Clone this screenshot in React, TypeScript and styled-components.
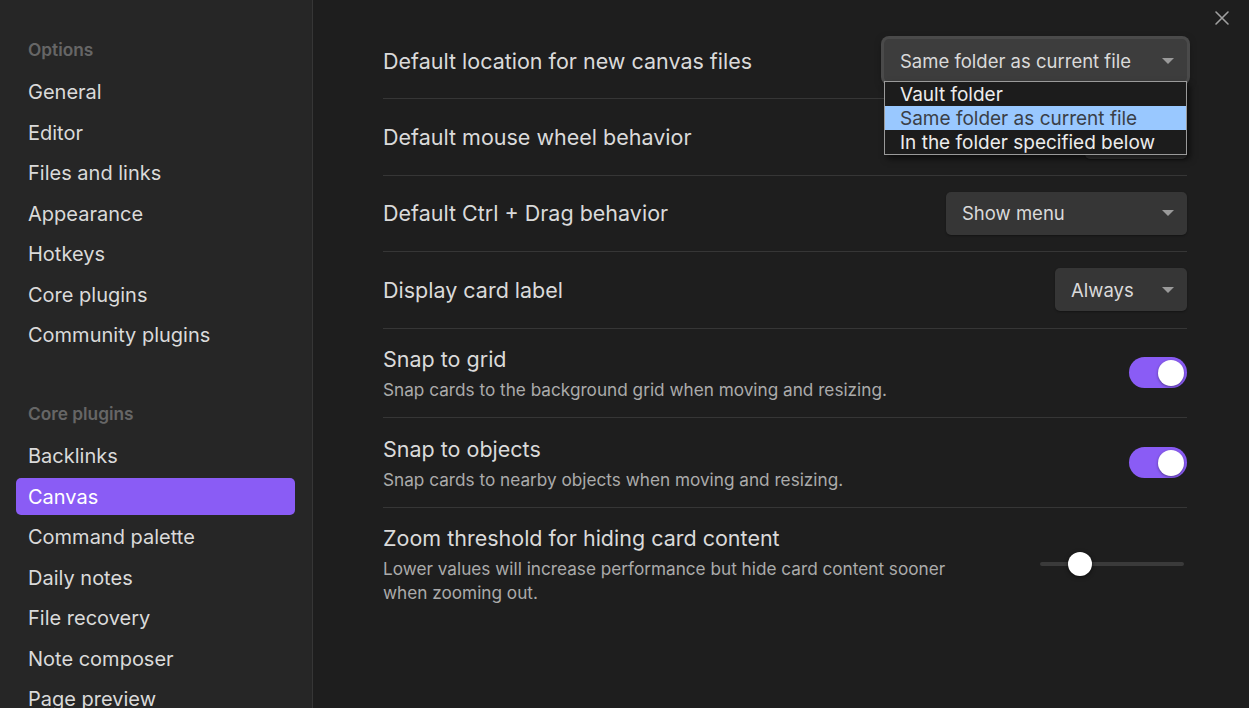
import React from "react";
import styled, { createGlobalStyle } from "styled-components";

const GlobalStyle = createGlobalStyle`
  html, body { margin: 0; padding: 0; background: #1e1e1e; }
  body { font-family: Inter, "Noto Sans", sans-serif; -webkit-font-smoothing: antialiased; }
  * { box-sizing: border-box; }
`;

const Shell = styled.div`
  display: flex;
  width: 1249px;
  height: 708px;
  overflow: hidden;
  position: relative;
  background: #1e1e1e;
`;

const Sidebar = styled.nav`
  width: 313px;
  flex-shrink: 0;
  background: #262626;
  border-right: 1px solid #363636;
  padding: 31px 17px 0 16px;
  display: flex;
  flex-direction: column;
`;

const Group = styled.div<{ $gap?: number }>`
  display: flex;
  flex-direction: column;
  margin-top: ${(p) => p.$gap ?? 0}px;
`;

const GroupTitle = styled.div`
  height: 36px;
  margin-bottom: 6.5px;
  padding: 0 12px;
  display: flex;
  align-items: center;
  font-size: 17.3px;
  font-weight: 600;
  color: #666666;
`;

const NavItem = styled.div<{ $active?: boolean }>`
  height: 37px;
  margin-bottom: 3.5px;
  padding: 0 12px;
  display: flex;
  align-items: center;
  border-radius: 5px;
  font-size: 20px;
  color: ${(p) => (p.$active ? "#ffffff" : "#dadada")};
  background: ${(p) => (p.$active ? "#8a5cf5" : "transparent")};
  white-space: nowrap;
`;

const Main = styled.main`
  flex: 1;
  padding: 23px 62px 0 70px;
  display: flex;
  flex-direction: column;
`;

const Row = styled.div<{ $first?: boolean }>`
  display: flex;
  align-items: center;
  justify-content: space-between;
  padding: 16.2px 0;
  border-top: ${(p) => (p.$first ? "none" : "1px solid #363636")};
  position: relative;
`;

const Info = styled.div`
  display: flex;
  flex-direction: column;
  gap: 5px;
  flex: 1 1 auto;
  min-width: 0;
`;

const Title = styled.div`
  font-size: 21.5px;
  line-height: 28px;
  color: #dadada;
`;

const Desc = styled.div`
  font-size: 17.2px;
  line-height: 23.5px;
  color: #ababab;
  max-width: 585px;
`;

const Control = styled.div`
  display: flex;
  align-items: center;
  justify-content: flex-end;
  flex-shrink: 0;
  position: relative;
`;

const SelectBox = styled.div<{ $w: number; $focused?: boolean }>`
  width: ${(p) => p.$w}px;
  height: 43px;
  border-radius: 5px;
  background: ${(p) => (p.$focused ? "#3d3d3d" : "#363636")};
  box-shadow: ${(p) =>
    p.$focused
      ? "0 0 0 3px #4a4a4a, 0 2px 8px rgba(0,0,0,0.6)"
      : "0 1px 2px rgba(0,0,0,0.35)"};
  display: flex;
  align-items: center;
  justify-content: space-between;
  padding: 0 13px 0 16px;
  font-size: 18.5px;
  color: #dadada;
  white-space: nowrap;
`;

const Caret = styled.span`
  width: 0;
  height: 0;
  border-left: 6px solid transparent;
  border-right: 6px solid transparent;
  border-top: 6px solid #9a9a9a;
`;

const Popup = styled.div`
  position: absolute;
  top: 42px;
  right: 0;
  width: 303px;
  background: #1c1c1c;
  border: 1px solid #9a9a9a;
  box-shadow: 3px 4px 6px rgba(0, 0, 0, 0.55);
  z-index: 5;
  display: flex;
  flex-direction: column;
`;

const Option = styled.div<{ $hl?: boolean }>`
  height: 24px;
  padding: 0 15px;
  display: flex;
  align-items: center;
  font-size: 19px;
  color: ${(p) => (p.$hl ? "#3a3f47" : "#ececec")};
  background: ${(p) => (p.$hl ? "#99c8ff" : "transparent")};
  white-space: nowrap;
`;

const Toggle = styled.div<{ $on?: boolean }>`
  width: 58px;
  height: 31px;
  border-radius: 16px;
  background: ${(p) => (p.$on ? "#8a5cf5" : "#3a3a3a")};
  display: flex;
  align-items: center;
  justify-content: ${(p) => (p.$on ? "flex-end" : "flex-start")};
  padding: 0 3px;
`;

const Knob = styled.div`
  width: 26px;
  height: 26px;
  border-radius: 50%;
  background: #ffffff;
  box-shadow: 0 1px 3px rgba(0, 0, 0, 0.4);
`;

const SliderWrap = styled.div`
  width: 147px;
  height: 26px;
  display: flex;
  align-items: center;
  position: relative;
  padding-right: 3px;
`;

const Track = styled.div`
  flex: 1;
  height: 4px;
  border-radius: 2px;
  background: #3a3a3a;
`;

const Thumb = styled.div`
  position: absolute;
  top: 1px;
  width: 24px;
  height: 24px;
  border-radius: 50%;
  background: #ffffff;
  box-shadow: 0 1px 4px rgba(0, 0, 0, 0.6);
`;

const Close = styled.button`
  position: absolute;
  top: 10px;
  right: 19px;
  width: 16px;
  height: 16px;
  padding: 0;
  border: none;
  background: transparent;
  color: #a0a0a0;
  display: flex;
`;

const options = ["General", "Editor", "Files and links", "Appearance", "Hotkeys", "Core plugins", "Community plugins"];
const plugins = ["Backlinks", "Canvas", "Command palette", "Daily notes", "File recovery", "Note composer", "Page preview"];

export default function App() {
  return (
    <>
      <GlobalStyle />
      <Shell>
        <Sidebar>
          <Group>
            <GroupTitle>Options</GroupTitle>
            {options.map((o) => (
              <NavItem key={o}>{o}</NavItem>
            ))}
          </Group>
          <Group $gap={38}>
            <GroupTitle>Core plugins</GroupTitle>
            {plugins.map((o) => (
              <NavItem key={o} $active={o === "Canvas"}>
                {o}
              </NavItem>
            ))}
          </Group>
        </Sidebar>
        <Main>
          <Row $first>
            <Info>
              <Title>Default location for new canvas files</Title>
            </Info>
            <Control>
              <SelectBox $w={303} $focused>
                Same folder as current file
                <Caret />
              </SelectBox>
              <Popup>
                <Option>Vault folder</Option>
                <Option $hl>Same folder as current file</Option>
                <Option>In the folder specified below</Option>
              </Popup>
            </Control>
          </Row>
          <Row>
            <Info>
              <Title>Default mouse wheel behavior</Title>
            </Info>
            <Control>
              <SelectBox $w={102}>
                Zoom
                <Caret />
              </SelectBox>
            </Control>
          </Row>
          <Row>
            <Info>
              <Title>Default Ctrl + Drag behavior</Title>
            </Info>
            <Control>
              <SelectBox $w={241}>
                Show menu
                <Caret />
              </SelectBox>
            </Control>
          </Row>
          <Row>
            <Info>
              <Title>Display card label</Title>
            </Info>
            <Control>
              <SelectBox $w={132}>
                Always
                <Caret />
              </SelectBox>
            </Control>
          </Row>
          <Row>
            <Info>
              <Title>Snap to grid</Title>
              <Desc>Snap cards to the background grid when moving and resizing.</Desc>
            </Info>
            <Control>
              <Toggle $on>
                <Knob />
              </Toggle>
            </Control>
          </Row>
          <Row>
            <Info>
              <Title>Snap to objects</Title>
              <Desc>Snap cards to nearby objects when moving and resizing.</Desc>
            </Info>
            <Control>
              <Toggle $on>
                <Knob />
              </Toggle>
            </Control>
          </Row>
          <Row>
            <Info>
              <Title>Zoom threshold for hiding card content</Title>
              <Desc>Lower values will increase performance but hide card content sooner when zooming out.</Desc>
            </Info>
            <Control>
              <SliderWrap>
                <Track />
                <Thumb style={{ left: 28 }} />
              </SliderWrap>
            </Control>
          </Row>
        </Main>
        <Close aria-label="Close">
          <svg width="16" height="16" viewBox="0 0 16 16" fill="none" stroke="currentColor" strokeWidth="1.6" strokeLinecap="round">
            <path d="M2 2 L14 14 M14 2 L2 14" />
          </svg>
        </Close>
      </Shell>
    </>
  );
}
